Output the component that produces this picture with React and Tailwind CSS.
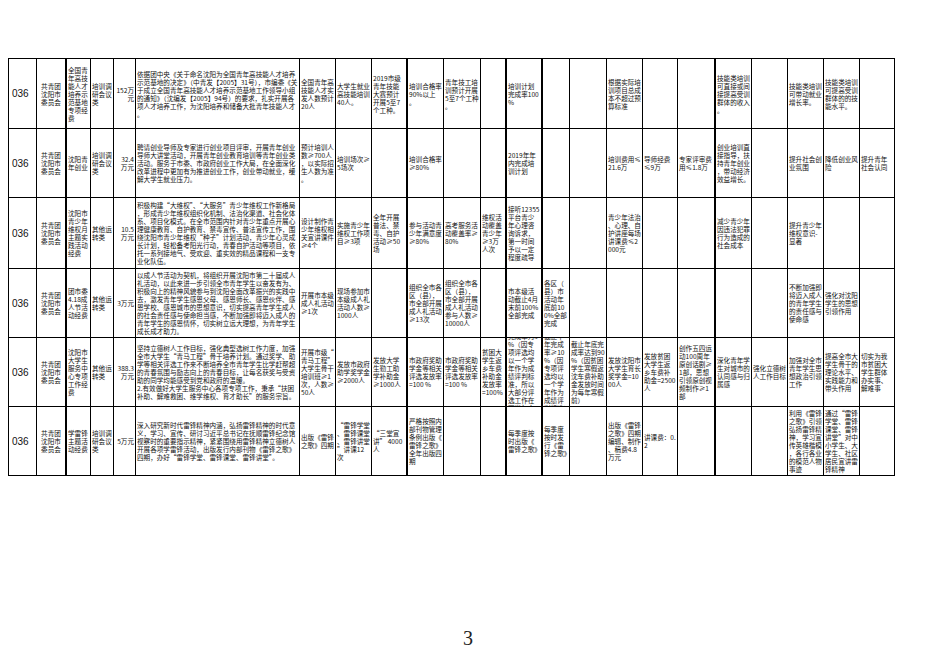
const COLS = [28, 30, 24, 23, 22, 164, 36, 36, 36, 36, 37, 26, 36, 27, 37, 36, 35, 38, 36, 36, 36, 36, 35];
const ROWS = [70, 69, 71, 69, 69, 69];
// columns followed by a heavy rule
const THICK = [1, 8, 11, 12, 17];

const ORG = "共青团沈阳市委员会";

const data = [
  [
    "036", ORG, "全国青年高技能人才培养示范基地专项经费", "培训调研会议类", "152万\n元",
    "依据团中央《关于命名沈阳为全国青年高技能人才培养示范基地的决定》（中青发【2005】31号），市编委《关于成立全国青年高技能人才培养示范基地工作领导小组的通知》（沈编发【2005】94号）的要求，扎实开展各项人才培养工作，为沈阳培养和储备大批青年技能人才。",
    "全国青年高技能人才实发人数预计20人", "大学生就业高技能培训40人。", "2019市级青年技能大赛预计开展5至7个工种。",
    "培训合格率90%以上。", "青年技工培训预计开展5至7个工种。", "", "培训计划完成率100%", "", "",
    "根据实际培训项目总成本不超过预算标准", "", "", "技能类培训可直接或间接提高受训群体的收入。", "",
    "技能类培训可带动就业增长率。", "技能类培训可提高受训群体的的技能水平。", "",
  ],
  [
    "036", ORG, "沈阳青年创业", "培训调研会议类", "32.4\n万元",
    "聘请创业导师及专家进行创业项目评审，开展青年创业导师大讲堂活动，开展青年创业教育培训等青年创业类活动。服务于市委、市政府创业工作大局，在全面深化改革进程中更加有为推进创业工作，创业带动就业，缓解大学生就业压力。",
    "预计培训人数≥700人，以实际招生人数为准。", "培训场次≥5场次", "", "培训合格率≥80%", "", "",
    "2019年年内完成培训计划", "", "", "培训费用≤21.6万", "导师经费≤9万", "专家评审费用≤1.8万",
    "创业培训直接指导，扶持青年创业，带动经济效益增长。", "", "提升社会创业氛围", "降低创业风险", "提升青年社会认同",
  ],
  [
    "036", ORG, "沈阳市青少年维权月主题实践活动经费", "其他运转类", "10.5\n万元",
    "积极构建“大维权”、“大服务”青少年维权工作新格局，形成青少年维权组织化机制、法治化渠道、社会化体系、项目化模式。在全市范围内针对青少年重点开展心理健康教育、自护教育、禁毒宣传、普法宣传工作，围绕沈阳市青少年维权“种子”计划活动，青少年心灵成长计划，轻松备考阳光行动，青春自护活动等项目，依托一系列接地气、受欢迎、重实效的精品课程和一支专业化队伍。",
    "设计制作青少年维权相关宣讲课件≥4个", "实施青少年维权工作项目≥3项", "全年开展普法、禁毒、自护活动≥50场",
    "参与活动青少年满意度≥80%", "高考服务活动覆盖率≥80%", "维权活动覆盖青少年≥3万人次",
    "接听12355平台青少年心理咨询诉求，第一时间予以一定程度疏导", "", "",
    "青少年法治、心理、自护讲座每场讲课费≤2000元", "", "", "减少青少年因违法犯罪行为造成的社会成本", "",
    "提升青少年维权意识-显著", "", "",
  ],
  [
    "036", ORG, "团市委4.18成人节活动经费", "其他运转类", "3万元",
    "以成人节活动为契机，将组织开展沈阳市第二十届成人礼活动，以此来进一步引领全市青年学生以奋发有为、积极向上的精神风貌参与到沈阳全面改革振兴的实践中去，激发青年学生感恩父母、感恩师长、感恩伙伴、感恩学校、感恩城市的思想意识，切实提高青年学生成人的社会责任感与使命担当感，不断加强即将迈入成人的青年学生的感恩情怀，切实树立远大理想，为青年学生成长成才助力。",
    "开展市本级成人礼活动≥1次", "现场参加市本级成人礼活动人数≥1000人", "",
    "组织全市各区（县），市全部开展成人礼活动≥13次", "组织全市各区（县），市全部开展成人礼活动参与人数≥10000人", "",
    "市本级活动截止4月末前100%全部完成", "各区（县）市活动年底前100%全部完成", "", "", "", "", "", "",
    "不断加强即将迈入成人的青年学生的责任感与使命感", "强化对沈阳学生的思想引领作用", "",
  ],
  [
    "036", ORG, "沈阳市大学生服务中心专项工作经费", "其他运转类", "388.3\n万元",
    "坚持立德树人工作目标，强化典型选树工作力度，加强全市大学生“青马工程”骨干培养计划。通过奖学、助学等相关评选工作来不断培养全市青年学生比学赶帮超的青春氛围与励志向上的青春目标，让每名获奖与受资助的同学均能感受到党和政府的温暖。\n2.有效做好大学生服务中心各项专项工作，秉承“扶困补助、解难救困、维学维权、育才助长”的服务宗旨。",
    "开展市级“青马工程”大学生骨干培训班≥1次，人数≥50人", "发放市政府助学奖学金≥2000人", "发放大学生勤工助学补助金≥1000人",
    "市政府奖助学金等相关评选发放率=100 %", "市政府奖助学金等相关评选发放率=100 %", "贫困大学生返乡车费补助金发放率=100%",
    "截止半年完成率为5%（因专项评选均以一个学年作为成绩评判标准，所以大部分评选工作在下半年完成）",
    "截止半年完成率≥10%（因专项评选均以一个学年作为成绩评判标准）",
    "截止年底完成率达到90%（因贫困学生寒假返沈车费补助金发放时间为每年寒假前）",
    "发放沈阳市大学生育长奖学金=1000人", "发放贫困大学生返乡车费补助金=2500人",
    "创作五四运动100周年原创话剧≥1部，思想引领原创视频制作≥1部",
    "深化青年学生对城市的认同感与归属感", "强化立德树人工作目标", "加强对全市青年学生思想政治引领工作",
    "提高全市大学生骨干的理论水平、实践能力和带头作用", "切实为我市贫困大学生群体办实事、解难事",
  ],
  [
    "036", ORG, "学雷锋主题活动经费", "培训调研会议类", "5万元",
    "深入研究新时代雷锋精神内涵，弘扬雷锋精神的时代意义，学习、宣传、研讨习近平总书记在抚顺雷锋纪念馆视察时的重要指示精神，紧紧围绕用雷锋精神立德树人开展各项学雷锋活动，出版发行内部刊物《雷锋之歌》四期，办好“雷锋学堂、雷锋课堂、雷锋讲堂”。",
    "出版《雷锋之歌》四期", "“雷锋学堂、雷锋课堂、雷锋讲堂”讲课12次", "“三堂宣讲” 4000人",
    "严格按照内部刊物管理条例出版《雷锋之歌》全年出版四期", "", "", "每季度按时出版《雷锋之歌》",
    "每季度按时发行《雷锋之歌》", "", "出版《雷锋之歌》四期编辑、制作、稿费4.8万元", "讲课费：0.2", "", "", "",
    "利用《雷锋之歌》引领弘扬雷锋精神，学习宣传英雄楷模，各行各业的模范人物事迹",
    "通过“雷锋学堂、雷锋课堂、雷锋讲堂”对中小学生、大学生、社区居民宣讲雷锋精神", "",
  ],
];

function Cell({ text, col }) {
  const right = THICK.includes(col) ? "border-r-2" : "border-r";
  if (col === 0) {
    return (
      <div className={`${right} border-b border-black flex items-center pl-[3px] overflow-hidden`}>
        <span className="text-[10px] text-[#111] font-['Liberation_Sans',sans-serif]">{text}</span>
      </div>
    );
  }
  const align = col === 1 ? "text-center" : col === 4 ? "text-right" : "text-left";
  return (
    <div
      className={`${right} border-b border-black flex flex-col justify-center [justify-content:safe_center] overflow-hidden px-px`}
    >
      <div className={`${align} whitespace-pre-line [line-break:anywhere] text-[6.6px] leading-[8px] text-[#111]`}>
        {text}
      </div>
    </div>
  );
}

export default function App() {
  return (
    <div className="w-[936px] h-[662px] bg-white font-['Noto_Sans_CJK_SC',sans-serif] overflow-hidden" lang="zh-CN">
      <div className="pt-[58px] pl-[8px]">
        <div
          className="grid border-l border-t border-black w-fit"
          style={{
            gridTemplateColumns: COLS.map((w) => `${w}px`).join(" "),
            gridTemplateRows: ROWS.map((h) => `${h}px`).join(" "),
          }}
        >
          {data.map((row, r) => row.map((t, c) => <Cell key={`${r}-${c}`} text={t} col={c} />))}
        </div>
      </div>
      <div className="mt-[152px] text-center text-[20px] leading-none text-[#222] font-['Liberation_Serif',serif]">3</div>
    </div>
  );
}
